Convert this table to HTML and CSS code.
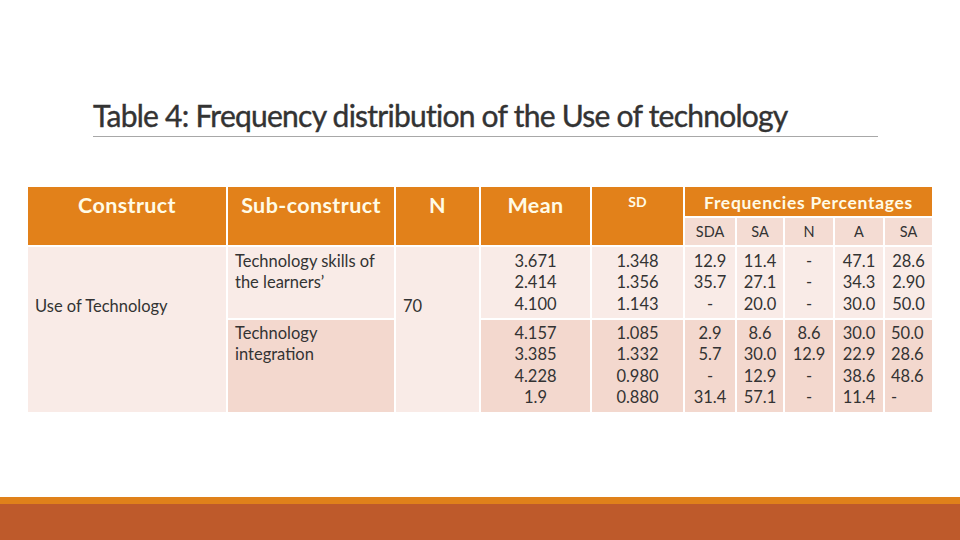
FILE: index.html
```html
<!DOCTYPE html>
<html>
<head>
<meta charset="utf-8">
<link rel="stylesheet" href="styles.css">
</head>
<body>
<div class="slide">
  <div class="title-wrap">
    <h1 class="title">Table 4: Frequency distribution of the Use of technology</h1>
  </div>
  <table class="data">
    <colgroup>
      <col class="c-construct"><col class="c-sub"><col class="c-n"><col class="c-mean"><col class="c-sd">
      <col class="c-sda"><col class="c-sa"><col class="c-nn"><col class="c-a"><col class="c-sa2">
    </colgroup>
    <thead>
      <tr class="h1">
        <th rowspan="2" class="hc">Construct</th>
        <th rowspan="2" class="hc">Sub-construct</th>
        <th rowspan="2" class="hc">N</th>
        <th rowspan="2" class="hc">Mean</th>
        <th rowspan="2" class="hc hsd">SD</th>
        <th colspan="5" class="hfreq">Frequencies Percentages</th>
      </tr>
      <tr class="h2">
        <th class="sub">SDA</th><th class="sub">SA</th><th class="sub">N</th><th class="sub">A</th><th class="sub">SA</th>
      </tr>
    </thead>
    <tbody>
      <tr class="r1">
        <td rowspan="2" class="construct">Use of Technology</td>
        <td class="subc">Technology skills of the learners’</td>
        <td rowspan="2" class="nval">70</td>
        <td class="num">3.671<br>2.414<br>4.100</td>
        <td class="num">1.348<br>1.356<br>1.143</td>
        <td class="num">12.9<br>35.7<br>-</td>
        <td class="num">11.4<br>27.1<br>20.0</td>
        <td class="num">-<br>-<br>-</td>
        <td class="num">47.1<br>34.3<br>30.0</td>
        <td class="num">28.6<br>2.90<br>50.0</td>
      </tr>
      <tr class="r2">
        <td class="subc">Technology integration</td>
        <td class="num">4.157<br>3.385<br>4.228<br>1.9</td>
        <td class="num">1.085<br>1.332<br>0.980<br>0.880</td>
        <td class="num">2.9<br>5.7<br>-<br>31.4</td>
        <td class="num">8.6<br>30.0<br>12.9<br>57.1</td>
        <td class="num">8.6<br>12.9<br>-<br>-</td>
        <td class="num">30.0<br>22.9<br>38.6<br>11.4</td>
        <td class="num left">50.0<br>28.6<br>48.6<br>-</td>
      </tr>
    </tbody>
  </table>
  <div class="footer">
    <div class="band-light"></div>
    <div class="band-dark"></div>
  </div>
</div>
</body>
</html>
```
FILE: styles.css
```css
html, body {
  margin: 0;
  padding: 0;
  background: #ffffff;
}
.slide {
  width: 960px;
  height: 540px;
  display: flex;
  flex-direction: column;
  font-family: Lato, "Open Sans", sans-serif;
  color: #333333;
}
.title-wrap {
  margin: 96px 0 0 93px;
  width: 785px;
  height: 40px;
  border-bottom: 1px solid #a8a8a8;
}
.title {
  margin: 0;
  font-family: Lato, sans-serif;
  font-weight: 400;
  font-size: 30px;
  line-height: 38px;
  letter-spacing: -0.75px;
  color: #333333;
  -webkit-text-stroke: 0.4px #333333;
  white-space: nowrap;
}
.data {
  margin: 48px 0 0 26px;
  width: 908px;
  table-layout: fixed;
  border-collapse: separate;
  border-spacing: 2px;
}
.c-construct { width: 198px; }
.c-sub { width: 166px; }
.c-n { width: 83px; }
.c-mean { width: 109px; }
.c-sd { width: 91px; }
.c-sda { width: 50px; }
.c-sa { width: 46px; }
.c-nn { width: 48px; }
.c-a { width: 48px; }
.c-sa2 { width: 47px; }
.data th, .data td {
  padding: 0;
}
.h1 { height: 29px; }
.h2 { height: 27px; }
.data .hc {
  background: #e2811a;
  color: #fffbe6;
  font-weight: 700;
  font-size: 21.5px;
  line-height: 24px;
  letter-spacing: 0.4px;
  vertical-align: top;
  padding-top: 6px;
  text-align: center;
}
.data .hsd {
  font-size: 14px;
  letter-spacing: 0;
  padding-top: 3px;
}
.data .hfreq {
  background: #e2811a;
  color: #fffbe6;
  font-weight: 700;
  font-size: 17.5px;
  letter-spacing: 0.7px;
  vertical-align: middle;
  text-align: center;
  padding-top: 2px;
}
.data .sub {
  background: #f4dcd3;
  font-weight: 400;
  font-size: 14.5px;
  color: #333333;
  text-align: center;
  vertical-align: middle;
}
.r1 { height: 71px; }
.r2 { height: 92px; }
.r1 td { background: #f9ebe7; }
.r2 td { background: #f3d8ce; }
.data .construct, .data .nval {
  vertical-align: top;
  font-size: 16.5px;
  line-height: 20px;
  padding-top: 49px;
  padding-left: 7px;
}
.data .subc {
  vertical-align: top;
  font-size: 16.5px;
  line-height: 21px;
  padding: 4px 6px 0 7px;
}
.data .r2 .subc { padding-top: 3px; }
.data .num {
  vertical-align: top;
  text-align: center;
  font-size: 16.5px;
  line-height: 21.4px;
  padding-top: 4px;
}
.data .r2 .num { padding-top: 3px; }
.data .num.left { text-align: left; padding-left: 6px; }
.footer {
  margin-top: auto;
  display: flex;
  flex-direction: column;
}
.band-light {
  height: 7px;
  background: #e0811a;
}
.band-dark {
  height: 36px;
  background: #be5a2b;
}
```
